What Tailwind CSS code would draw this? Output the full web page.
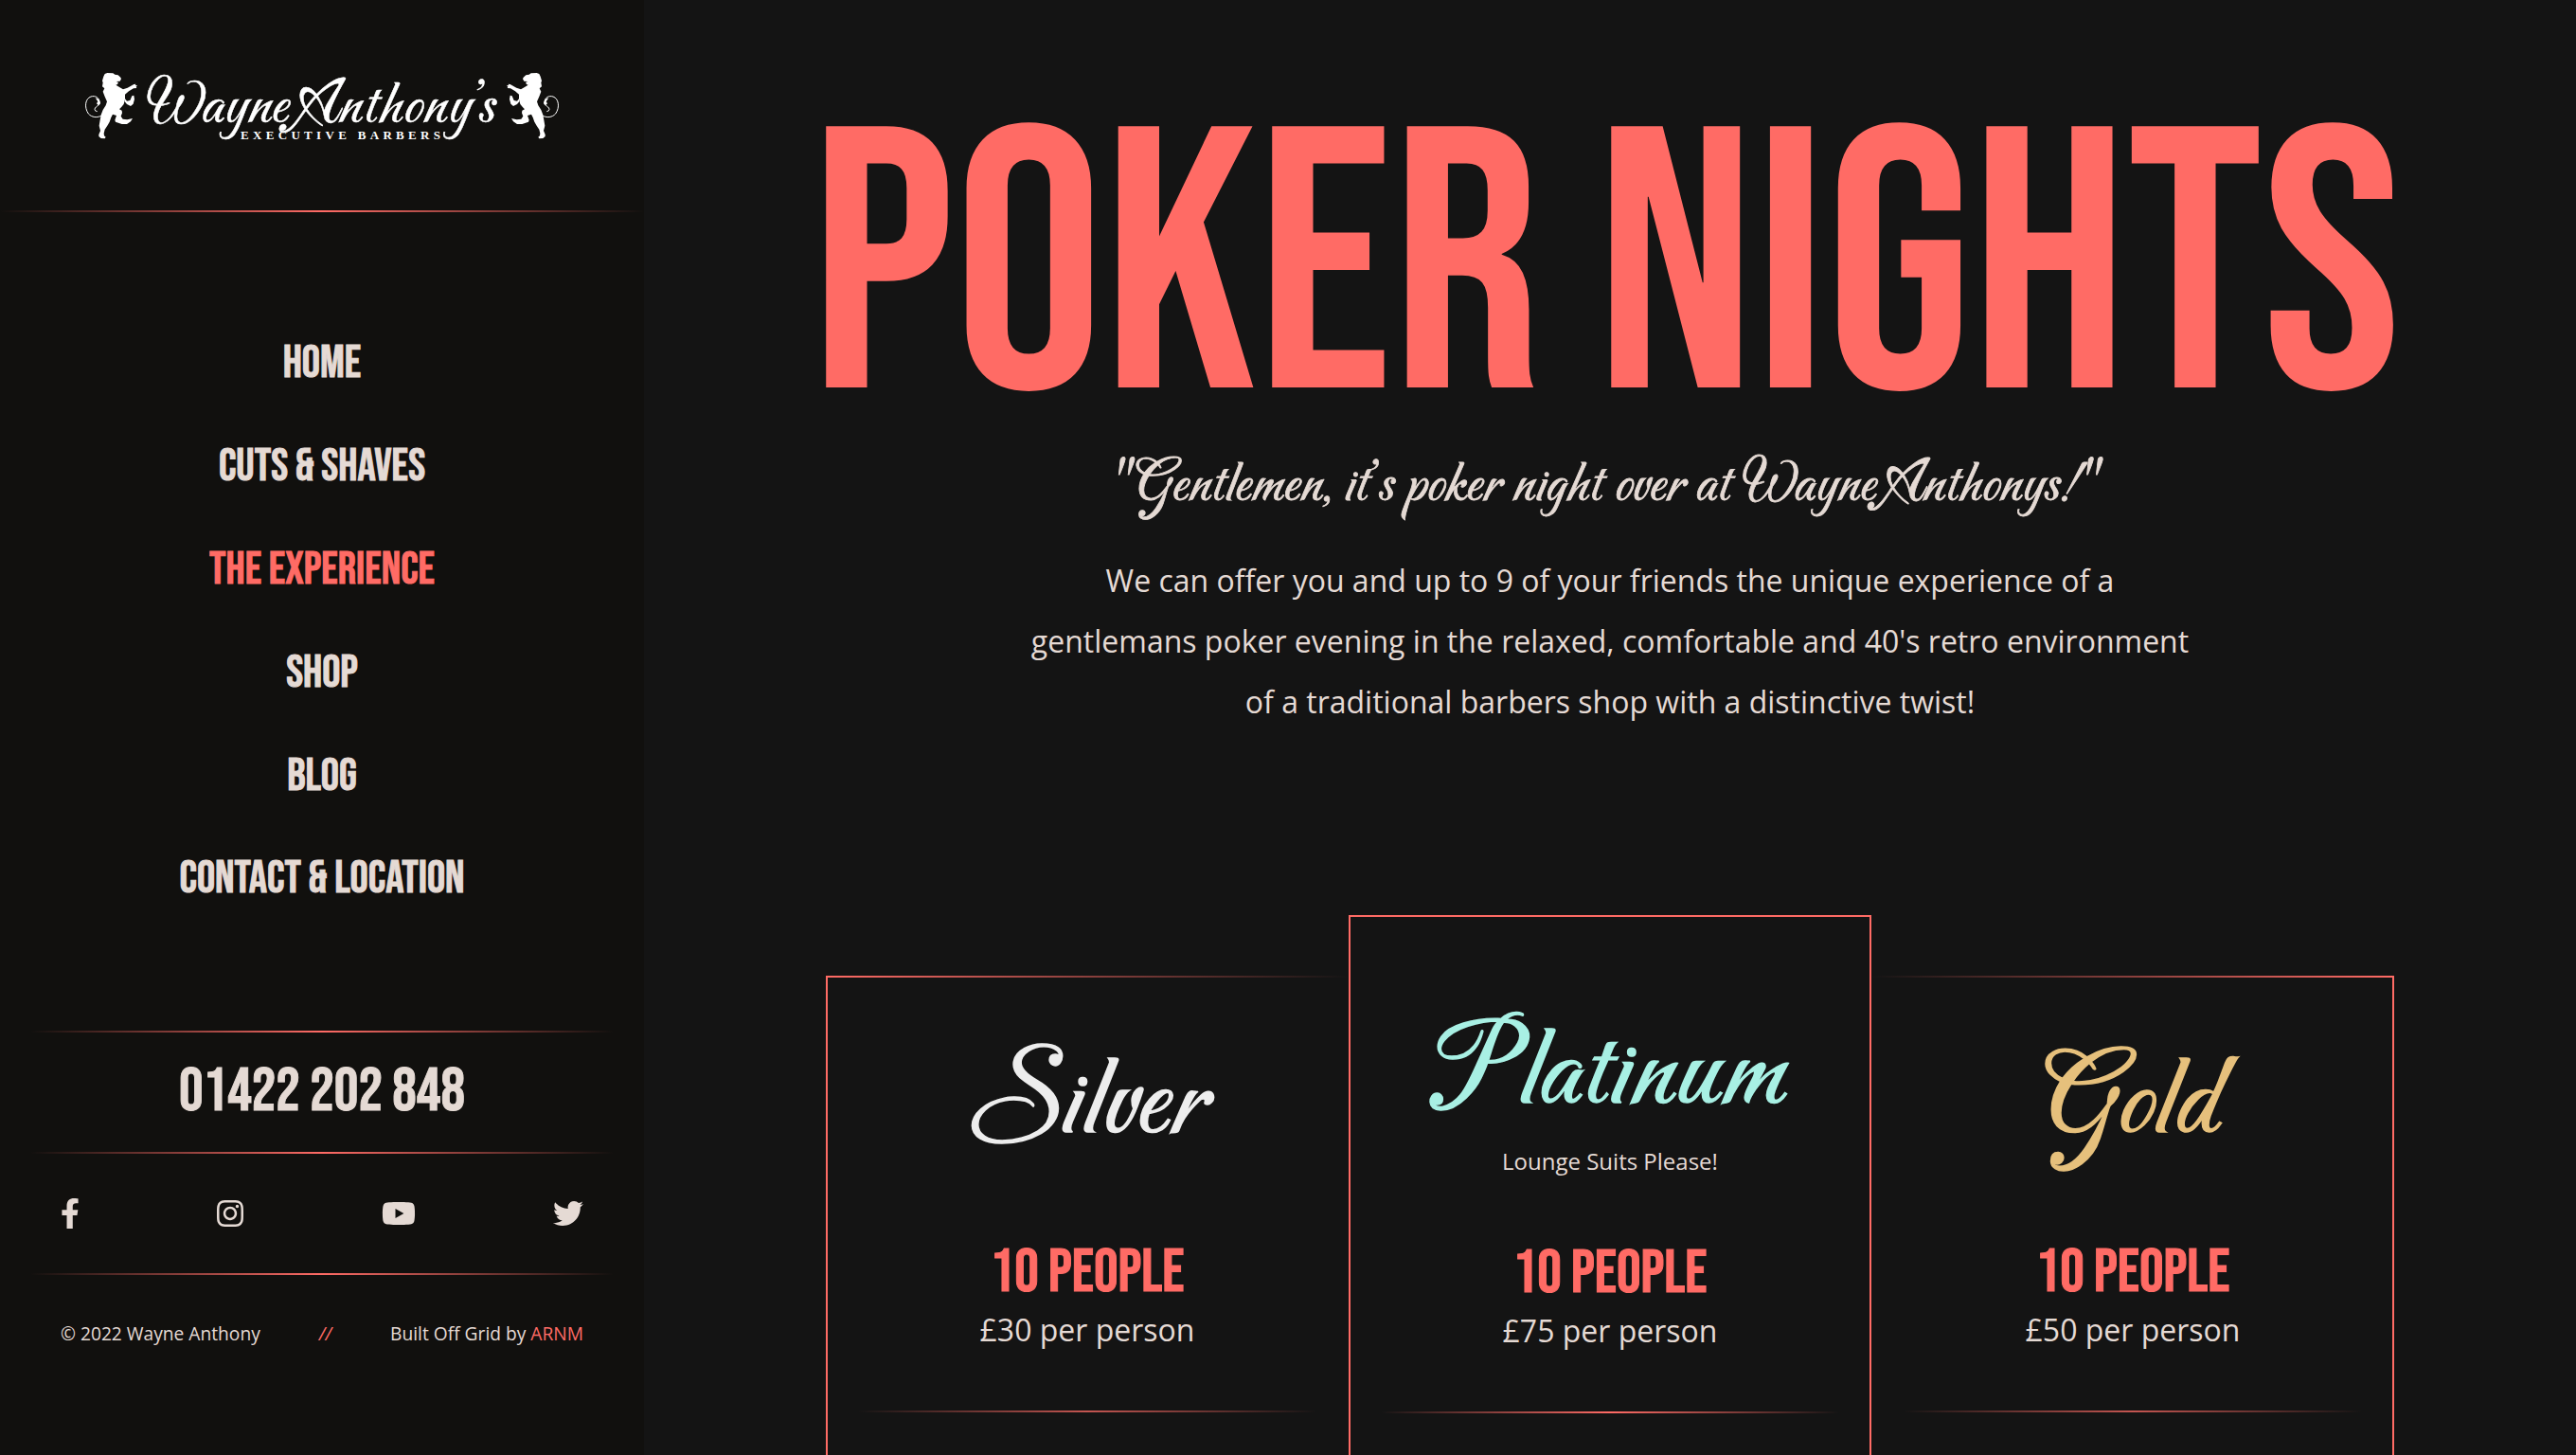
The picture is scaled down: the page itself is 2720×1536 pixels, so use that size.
<!DOCTYPE html>
<html lang="en">
<head>
<meta charset="utf-8">
<title>Poker Nights</title>
<script src="https://cdn.jsdelivr.net/npm/@tailwindcss/browser@4"></script>
</head>
<body class="flex h-screen overflow-hidden bg-[#141414] font-['Open_Sans',sans-serif] text-[#e5dad4]">
<aside class="flex h-full w-[680px] shrink-0 flex-col bg-[#11100e]">
  <header class="flex h-[222px] justify-center pt-16">
    <svg class="h-[100px] w-[520px]" viewBox="0 0 520 100" fill="#fff">
      <defs>
        <g id="lion" transform="scale(.33333)">
          <path d="M92 42L100 39 118 40 124 44 134 46 142 53 144 58 140 65 128 66 135 69 132 75 127 77 142 86 150 91 164 86 184 75 190 74 189 78 195 79 191 83 193 87 183 88 168 97 156 107 156 122 152 138 144 148 138 154 146 158 147 166 143 176 149 185 163 187 180 183 174 193 162 201 146 201 126 194 124 188 129 174 117 170 112 180 107 194 100 206 92 218 89 230 90 238 95 242 92 247 80 246 73 240 73 234 78 222 74 206 77 188 80 172 86 156 95 142 99 130 92 114 86 98 91 88 84 82 86 70 84 64 88 50Z"/>
          <path d="M155 119L162 128 172 126 178 112 184 110 186 122 182 137 174 144 162 138 155 130Z"/>
          <path d="M82 174C68 182 50 180 40 168C26 148 30 120 48 114C62 110 72 116 75 130C80 144 62 142 60 154Q60 160 68 161" fill="none" stroke="#fff" stroke-width="3"/>
          <path d="M62 118L74 122 78 134 72 142 66 136 70 130Z"/>
        </g>
      </defs>
      <use href="#lion"/>
      <use href="#lion" transform="matrix(-1 0 0 1 520 0)"/>
      <g font-family="Carattere, cursive" font-size="68" stroke="#fff" stroke-width=".5">
        <text x="75" y="65">Wayne</text>
        <text x="235" y="65" letter-spacing=".8">Anthony</text>
        <text x="413" y="65">’</text>
        <text x="425" y="65">s</text>
      </g>
      <text x="174" y="82.5" font-family="Liberation Serif, serif" font-weight="700" font-size="13" textLength="211">EXECUTIVE BARBERS</text>
    </svg>
  </header>
  <div class="h-0.5 bg-linear-to-r from-[#ff6b65]/0 via-[#ff6b65] to-[#ff6b65]/0"></div>
  <nav class="mt-[106px] flex flex-col text-center font-['Bebas_Neue',sans-serif] text-5xl [-webkit-text-stroke:0.9px_currentColor]">
    <a class="flex h-[108.8px] items-center justify-center">HOME</a>
    <a class="flex h-[108.8px] items-center justify-center">CUTS &amp; SHAVES</a>
    <a class="flex h-[108.8px] items-center justify-center text-[#ff6b65]">THE EXPERIENCE</a>
    <a class="flex h-[108.8px] items-center justify-center">SHOP</a>
    <a class="flex h-[108.8px] items-center justify-center">BLOG</a>
    <a class="flex h-[108.8px] items-center justify-center">CONTACT &amp; LOCATION</a>
  </nav>
  <div class="mt-[105px] px-8">
    <div class="h-0.5 bg-linear-to-r from-[#ff6b65]/0 via-[#ff6b65] to-[#ff6b65]/0"></div>
    <p class="flex h-[126px] items-center justify-center font-['Bebas_Neue',sans-serif] text-[64px] [-webkit-text-stroke:0.9px_currentColor]">01422 202 848</p>
    <div class="h-0.5 bg-linear-to-r from-[#ff6b65]/0 via-[#ff6b65] to-[#ff6b65]/0"></div>
    <div class="flex h-[126px] items-center justify-between px-8">
      <svg class="h-8 w-5" viewBox="0 0 320 512" fill="currentColor"><path d="M279.14 288l14.22-92.66h-88.91v-60.13c0-25.35 12.42-50.06 52.24-50.06h40.42V6.26S260.43 0 225.36 0c-73.22 0-121.08 44.38-121.08 124.72v70.62H22.89V288h81.39v224h100.17V288z"/></svg>
      <svg class="h-8 w-7" viewBox="0 0 448 512" fill="currentColor"><path d="M224.1 141c-63.6 0-114.9 51.3-114.9 114.9s51.3 114.9 114.9 114.9S339 319.500 339 255.900 287.700 141 224.100 141zm0 189.600c-41.100 0-74.700-33.500-74.700-74.700s33.500-74.700 74.700-74.700 74.700 33.500 74.700 74.700-33.600 74.700-74.700 74.700zm146.400-194.300c0 14.900-12 26.800-26.800 26.800-14.900 0-26.800-12-26.800-26.800s12-26.800 26.800-26.800 26.800 12 26.800 26.800zm76.100 27.200c-1.700-35.900-9.900-67.700-36.200-93.900-26.200-26.200-58-34.400-93.900-36.200-37-2.100-147.900-2.100-184.900 0-35.800 1.700-67.600 9.900-93.900 36.100s-34.400 58-36.200 93.900c-2.100 37-2.100 147.900 0 184.900 1.700 35.900 9.900 67.700 36.200 93.900s58 34.400 93.900 36.200c37 2.100 147.900 2.100 184.900 0 35.900-1.700 67.700-9.900 93.900-36.200 26.200-26.200 34.400-58 36.200-93.900 2.100-37 2.100-147.800 0-184.800zM398.800 388c-7.800 19.600-22.900 34.700-42.600 42.600-29.500 11.700-99.500 9-132.100 9s-102.700 2.600-132.100-9c-19.600-7.800-34.700-22.900-42.600-42.600-11.700-29.500-9-99.500-9-132.100s-2.600-102.700 9-132.100c7.800-19.600 22.900-34.700 42.600-42.600 29.500-11.700 99.500-9 132.100-9s102.700-2.600 132.100 9c19.600 7.800 34.700 22.900 42.600 42.600 11.700 29.500 9 99.500 9 132.100s2.700 102.700-9 132.100z"/></svg>
      <svg class="h-8 w-9" viewBox="0 0 576 512" fill="currentColor"><path d="M549.655 124.083c-6.281-23.650-24.787-42.276-48.284-48.597C458.781 64 288 64 288 64S117.220 64 74.629 75.486c-23.497 6.322-42.003 24.947-48.284 48.597-11.412 42.867-11.412 132.305-11.412 132.305s0 89.438 11.412 132.305c6.281 23.650 24.787 41.500 48.284 47.821C117.220 448 288 448 288 448s170.780 0 213.371-11.486c23.497-6.321 42.003-24.171 48.284-47.821 11.412-42.867 11.412-132.305 11.412-132.305s0-89.438-11.412-132.305zm-317.510 213.508V175.185l142.739 81.205-142.739 81.201z"/></svg>
      <svg class="size-8" viewBox="0 0 512 512" fill="currentColor"><path d="M459.370 151.716c.325 4.548.325 9.097.325 13.645 0 138.720-105.583 298.558-298.558 298.558-59.452 0-114.680-17.219-161.137-47.106 8.447.974 16.568 1.299 25.340 1.299 49.055 0 94.213-16.568 130.274-44.832-46.132-.975-84.792-31.188-98.112-72.772 6.498.974 12.995 1.624 19.818 1.624 9.421 0 18.843-1.300 27.614-3.573-48.081-9.747-84.143-51.980-84.143-102.985v-1.299c13.969 7.797 30.214 12.670 47.431 13.319-28.264-18.843-46.781-51.005-46.781-87.391 0-19.492 5.197-37.360 14.294-52.954 51.655 63.675 129.300 105.258 216.365 109.807-1.624-7.797-2.599-15.918-2.599-24.040 0-57.828 46.782-104.934 104.934-104.934 30.213 0 57.502 12.670 76.670 33.137 23.715-4.548 46.456-13.320 66.599-25.340-7.798 24.366-24.366 44.833-46.132 57.827 21.117-2.273 41.584-8.122 60.426-16.243-14.292 20.791-32.161 39.308-52.628 54.253z"/></svg>
    </div>
    <div class="h-0.5 bg-linear-to-r from-[#ff6b65]/0 via-[#ff6b65] to-[#ff6b65]/0"></div>
    <footer class="flex h-[126px] items-center justify-between px-8 text-[19.2px]">
      <span>© 2022 Wayne Anthony</span>
      <span class="italic text-[#ff6b65]">//</span>
      <span>Built Off Grid by <a class="text-[#ff6b65]">ARNM</a></span>
    </footer>
  </div>
</aside>

<main class="flex flex-1 flex-col items-center *:shrink-0">
  <h1 class="mt-[94px] mr-[9px] h-[394px] whitespace-nowrap font-['Bebas_Neue',sans-serif] text-[394px] leading-none tracking-[-0.6px] [word-spacing:-5px] text-[#ff6b65]">POKER NIGHTS</h1>
  <h2 class="-mt-1.5 h-[99px] whitespace-nowrap font-['Carattere',cursive] text-[64px] leading-[64px] [-webkit-text-stroke:0.8px_currentColor]">"Gentlemen, i<span class="tracking-[-6px]">t</span><span class="tracking-[-2px]">’</span>s poker night over at Wayne<span class="ml-2.5">Anthonys!"</span></h2>
  <p class="text-center text-[32px] leading-[64px]">We can offer you and up to 9 of your friends the unique experience of a<br>gentlemans poker evening in the relaxed, comfortable and 40's retro environment<br>of a traditional barbers shop with a distinctive twist!</p>

  <section class="mt-[193px] grid w-[1656px] grid-cols-3">
    <article class="mt-16 flex h-[506px] flex-col border-l-2 border-[#ff6b65] pr-0.5 text-center *:shrink-0">
      <div class="-mr-0.5 h-0.5 bg-linear-to-r from-[#ff6b65] to-[#ff6b65]/0"></div>
      <h3 class="mt-[71px] h-32 font-['Carattere',cursive] text-[128px] leading-[128px] text-[#ededed] [-webkit-text-stroke:1.5px_currentColor]">Silver</h3>
      <p class="mt-[74px] font-['Bebas_Neue',sans-serif] text-[64px] leading-[77px] text-[#ff6b65] [-webkit-text-stroke:1px_currentColor]">10 PEOPLE</p>
      <p class="-mt-0.5 text-[32px] leading-[48px]">£30 per person</p>
      <div class="mx-8 mt-[61px] h-0.5 bg-linear-to-r from-[#ff6b65]/0 via-[#ff6b65]/75 to-[#ff6b65]/0"></div>
    </article>
    <article class="flex h-[570px] flex-col border-2 border-b-0 border-[#ff6b65] text-center *:shrink-0">
      <h3 class="mt-[104px] h-32 font-['Carattere',cursive] text-[128px] leading-[128px] text-[#a8f0e4] [-webkit-text-stroke:1.5px_currentColor]">Platinum</h3>
      <p class="mt-2 text-[24px] leading-[36px]">Lounge Suits Please!</p>
      <p class="mt-[62px] font-['Bebas_Neue',sans-serif] text-[64px] leading-[77px] text-[#ff6b65] [-webkit-text-stroke:1px_currentColor]">10 PEOPLE</p>
      <p class="-mt-0.5 text-[32px] leading-[48px]">£75 per person</p>
      <div class="mx-8 mt-[61px] h-0.5 bg-linear-to-r from-[#ff6b65]/0 via-[#ff6b65] to-[#ff6b65]/0"></div>
    </article>
    <article class="mt-16 flex h-[506px] flex-col border-r-2 border-[#ff6b65] pl-0.5 text-center *:shrink-0">
      <div class="-ml-0.5 h-0.5 bg-linear-to-r from-[#ff6b65]/0 to-[#ff6b65]"></div>
      <h3 class="mt-[71px] h-32 font-['Carattere',cursive] text-[128px] leading-[128px] text-[#e6c07c] [-webkit-text-stroke:1.5px_currentColor]">Gold</h3>
      <p class="mt-[74px] font-['Bebas_Neue',sans-serif] text-[64px] leading-[77px] text-[#ff6b65] [-webkit-text-stroke:1px_currentColor]">10 PEOPLE</p>
      <p class="-mt-0.5 text-[32px] leading-[48px]">£50 per person</p>
      <div class="mx-8 mt-[61px] h-0.5 bg-linear-to-r from-[#ff6b65]/0 via-[#ff6b65]/75 to-[#ff6b65]/0"></div>
    </article>
  </section>
</main>
</body>
</html>
